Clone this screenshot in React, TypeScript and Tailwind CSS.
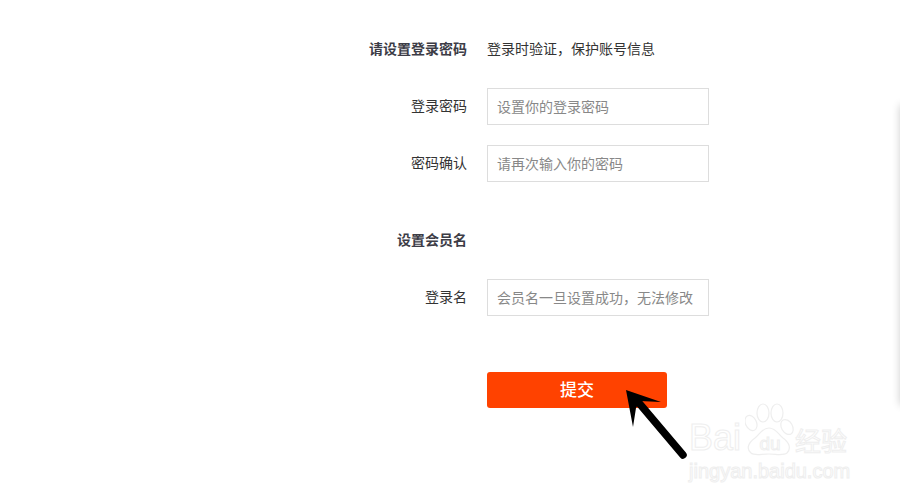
const font = "font-['Liberation_Sans','Noto_Sans_CJK_SC',sans-serif]";

function Row({ label, placeholder, top }: { label: string; placeholder: string; top: string }) {
  return (
    <div className={`flex items-center gap-[20px] ${top}`}>
      <label className="w-[467px] shrink-0 text-right text-[14px] text-[#333]">{label}</label>
      <input
        placeholder={placeholder}
        className="h-[37px] w-[222px] border border-[#ddd] px-[9px] text-[14px] text-[#333] outline-none placeholder:text-[#888]"
      />
    </div>
  );
}

function Heading({ title, hint, top }: { title: string; hint?: string; top: string }) {
  return (
    <div className={`flex h-[36px] items-center gap-[20px] ${top}`}>
      <div className="w-[467px] shrink-0 text-right text-[14px] font-bold text-[#3c3c46]">{title}</div>
      {hint && <div className="text-[14px] text-[#333]">{hint}</div>}
    </div>
  );
}

function Arrow() {
  return (
    <svg className="absolute left-[620px] top-[385px]" width="75" height="80" viewBox="620 385 75 80">
      <path d="M639 403 L683 455" stroke="#000" strokeWidth="7.5" strokeLinecap="round" fill="none" />
      <path d="M626 390 L661 402 L640 401 L636 408 L633 427 Z" fill="#000" />
    </svg>
  );
}

function Watermark() {
  const outline = "text-white [-webkit-text-stroke:1px_#e8e8e8] leading-none";
  return (
    <div className="absolute left-[689px] top-[400px] flex w-[170px] flex-col gap-[4px] opacity-70">
      <div className="flex h-[57px] items-end">
        <span className={`w-[56px] pb-[1px] text-[36px] ${outline}`}>Bai</span>
        <div className="relative flex h-[57px] w-[50px] items-end justify-center pb-[4px]">
          <svg className="absolute left-0 top-0" width="50" height="57" viewBox="745 400 50 57" fill="#fff" stroke="#e8e8e8" strokeWidth="1.2">
            <ellipse cx="751" cy="423" rx="5.5" ry="8" transform="rotate(-25 751 423)" />
            <ellipse cx="763" cy="413" rx="6" ry="9" />
            <ellipse cx="777" cy="413" rx="6" ry="9" />
            <ellipse cx="787" cy="427" rx="5.5" ry="8" transform="rotate(-30 787 427)" />
            <path d="M769 428 C776 428 778 434 783 438 C790 443 791 449 787 453 C783 456 776 454 769 454 C761 454 754 456 751 453 C746 449 748 443 755 438 C760 434 762 428 769 428 Z" />
          </svg>
          <span className={`relative text-[19px] ${outline}`}>du</span>
        </div>
        <span className={`whitespace-nowrap pb-[2px] text-[26px] ${outline}`}>经验</span>
      </div>
      <span className={`whitespace-nowrap text-[20px] ${outline}`}>jingyan.baidu.com</span>
    </div>
  );
}

export default function App() {
  return (
    <div className={`relative h-[500px] w-[900px] overflow-hidden bg-white pt-[31px] ${font}`}>
      <Heading title="请设置登录密码" hint="登录时验证，保护账号信息" top="" />
      <Row label="登录密码" placeholder="设置你的登录密码" top="mt-[21px]" />
      <Row label="密码确认" placeholder="请再次输入你的密码" top="mt-[20px]" />
      <Heading title="设置会员名" top="mt-[40px]" />
      <Row label="登录名" placeholder="会员名一旦设置成功，无法修改" top="mt-[21px]" />
      <div className="ml-[487px] mt-[56px]">
        <button className="h-[36px] w-[180px] rounded-[3px] bg-[#ff4200] pt-[1px] text-[17px] font-medium text-white">提交</button>
      </div>
      <div className="absolute left-[900px] top-[105px] h-[300px] w-[10px] shadow-[0_0_9px_rgba(0,0,0,0.2)]" />
      <Watermark />
      <Arrow />
    </div>
  );
}
